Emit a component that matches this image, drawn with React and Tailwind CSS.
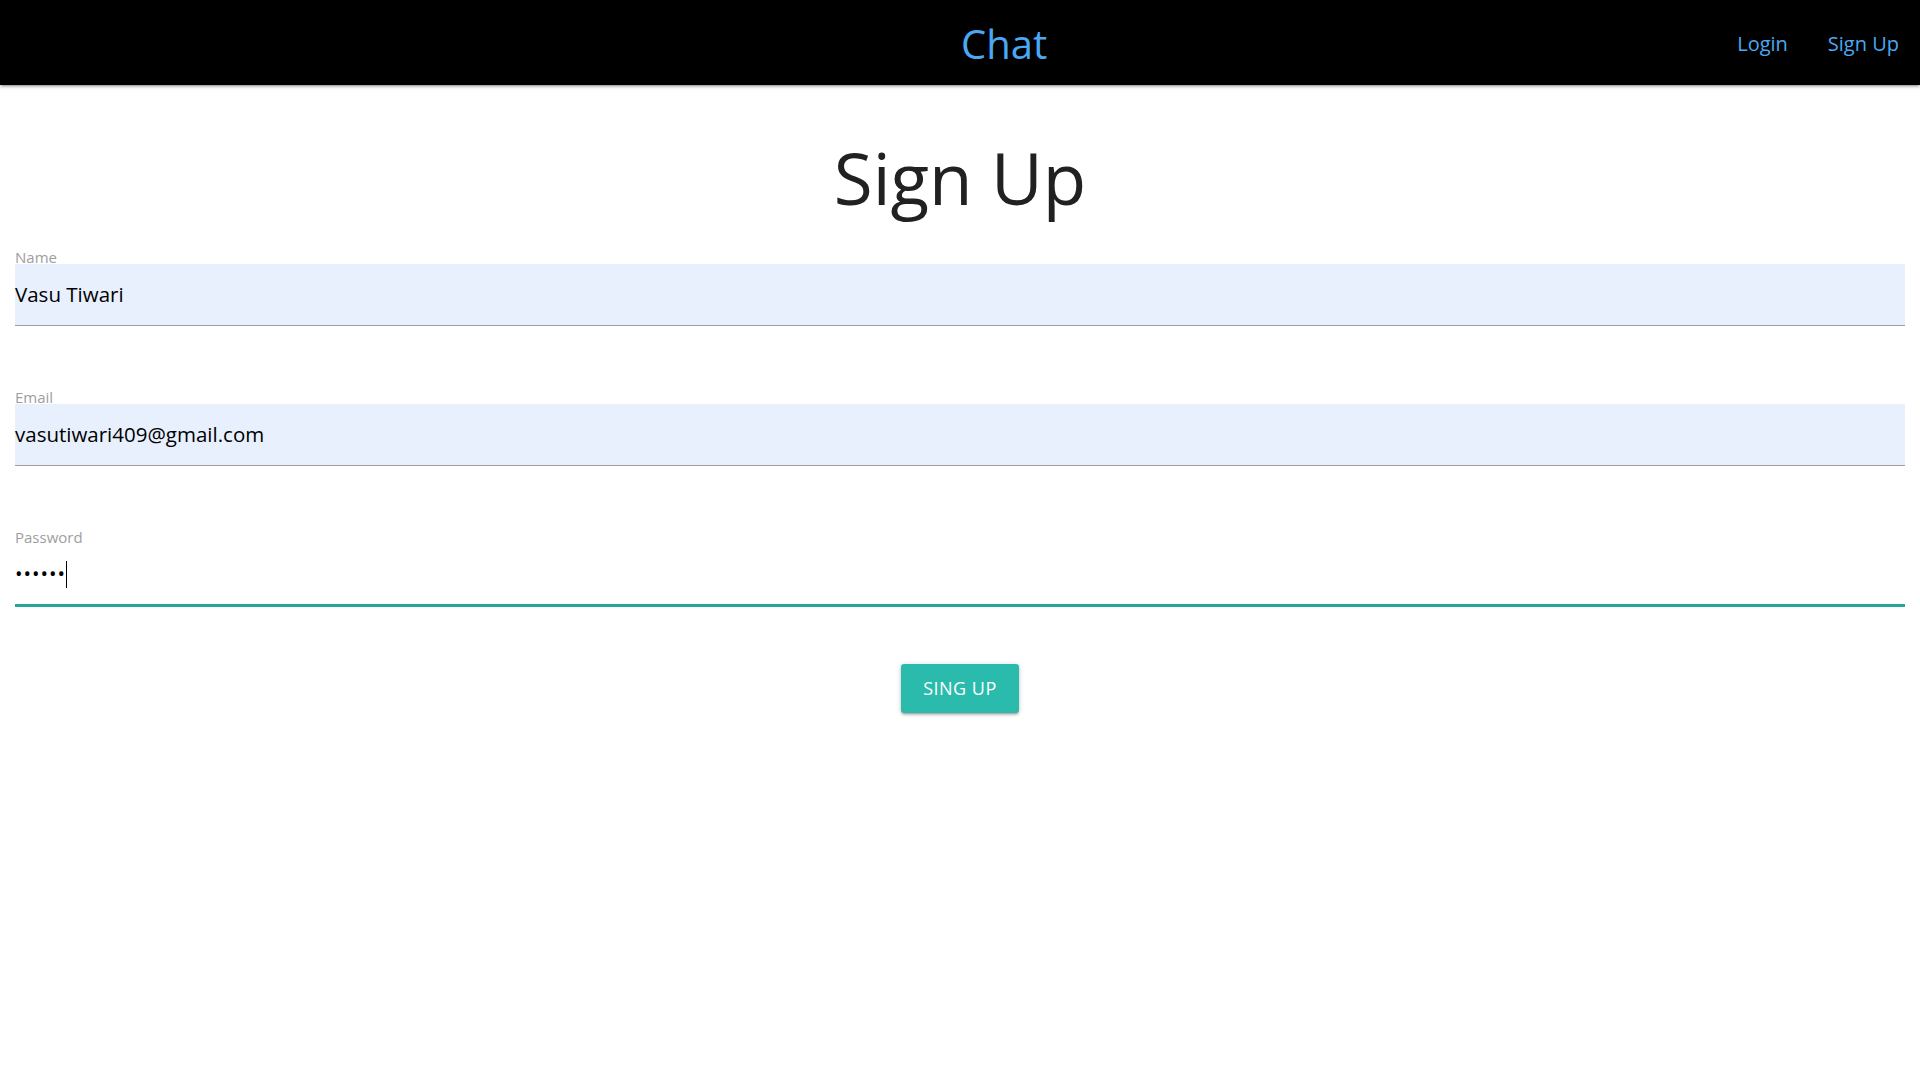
import React from "react";

const font = { fontFamily: '"Open Sans", "Noto Sans", sans-serif' };

const Field = ({ label, value, focused }) => (
  <div>
    <div className="h-[14px] text-[15px] leading-[14px] text-[#9e9e9e]">{label}</div>
    {focused ? (
      <div className="flex h-[63px] items-center border-b-[3px] border-[#26a69a] text-[20px] text-black">
        <span className="tracking-[1px]">••••••</span>
        <span className="h-[27px] w-px bg-black" />
      </div>
    ) : (
      <div className="flex h-[62px] items-center border-b border-[#9e9e9e] bg-[#e8f0fe] text-[20.5px] text-black">
        {value}
      </div>
    )}
  </div>
);

const App = () => {
  return (
    <div className="min-h-screen bg-white" style={font}>
      <nav className="flex h-[85px] items-center bg-black pt-[3px] shadow-[0_2px_2px_0_rgba(0,0,0,0.14),0_3px_1px_-2px_rgba(0,0,0,0.12),0_1px_5px_0_rgba(0,0,0,0.2)]">
        <a className="ml-[961px] text-[40px] leading-none text-[#4aa8f5]">Chat</a>
        <ul className="ml-auto flex items-center pr-[21px] text-[20px] text-[#4aa8f5]">
          <li className="px-[20px]">Login</li>
          <li className="pl-[20px]">Sign Up</li>
        </ul>
      </nav>

      <h2 className="mt-[57px] text-center text-[71px] leading-[72px] text-[#212121]">Sign Up</h2>

      <div className="mt-[36px] flex flex-col gap-[64px] px-[15px]">
        <Field label="Name" value="Vasu Tiwari" />
        <Field label="Email" value="vasutiwari409@gmail.com" />
        <Field label="Password" focused />
      </div>

      <div className="mt-[57px] flex justify-center">
        <button className="h-[49px] w-[118px] rounded-[3px] bg-[#2bbbad] text-[18px] uppercase tracking-[0.5px] text-white shadow-[0_2px_2px_0_rgba(0,0,0,0.14),0_3px_1px_-2px_rgba(0,0,0,0.12),0_1px_5px_0_rgba(0,0,0,0.2)]">
          Sing Up
        </button>
      </div>
    </div>
  );
};

export default App;
